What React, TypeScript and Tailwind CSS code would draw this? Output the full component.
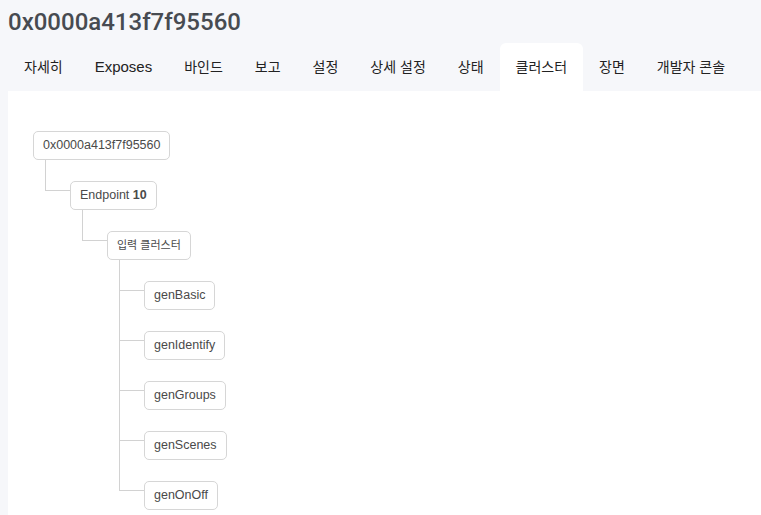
import React from "react";

type TNode = { label: React.ReactNode; korean?: boolean; children?: TNode[] };

const tree: TNode = {
  label: "0x0000a413f7f95560",
  children: [
    {
      label: (
        <>
          Endpoint <span className="font-bold">10</span>
        </>
      ),
      children: [
        {
          label: "입력 클러스터",
          korean: true,
          children: [
            { label: "genBasic" },
            { label: "genIdentify" },
            { label: "genGroups" },
            { label: "genScenes" },
            { label: "genOnOff" },
          ],
        },
      ],
    },
  ],
};

function Box({ node }: { node: TNode }) {
  return (
    <div
      className={
        "flex h-[29px] items-center rounded-[5px] border border-[#d6d6d6] bg-white px-[9px] text-[#4a4a4a] " +
        (node.korean ? "text-[11px]" : "text-[12.5px]")
      }
    >
      <span className="whitespace-pre">{node.label}</span>
    </div>
  );
}

function Tree({ node }: { node: TNode }) {
  const kids = node.children ?? [];
  return (
    <div className="flex flex-col items-start">
      <Box node={node} />
      {kids.length > 0 && (
        <div className="ml-[12px] flex flex-col">
          {kids.map((c, i) => (
            <div key={i} className="relative pl-[25px] pt-[21px]">
              <div
                className={
                  "absolute left-0 top-0 w-px bg-[#d2d2d2] " +
                  (i === kids.length - 1 ? "h-[30px]" : "h-full")
                }
              />
              <div className="absolute left-0 top-[30px] h-px w-[25px] bg-[#d2d2d2]" />
              <Tree node={c} />
            </div>
          ))}
        </div>
      )}
    </div>
  );
}

const tabs: { label: string; latin?: boolean; active?: boolean }[] = [
  { label: "자세히" },
  { label: "Exposes", latin: true },
  { label: "바인드" },
  { label: "보고" },
  { label: "설정" },
  { label: "상세 설정" },
  { label: "상태" },
  { label: "클러스터", active: true },
  { label: "장면" },
  { label: "개발자 콘솔" },
];

export default function App() {
  return (
    <div
      className="min-h-screen overflow-hidden bg-[#f6f7fa]"
      style={{ fontFamily: '"Liberation Sans", "Noto Sans CJK KR", sans-serif' }}
    >
      <div
        className="px-2 pt-[6px] text-[24px] font-medium leading-[32px] text-[#474b51]"
        style={{ fontFamily: 'Roboto, "Liberation Sans", sans-serif' }}
      >
        0x0000a413f7f95560
      </div>
      <div className="mt-[5px] flex h-[48px] px-2">
        {tabs.map((t) => (
          <div
            key={t.label}
            className={
              "flex h-full items-center whitespace-pre px-4 text-[#222222] " +
              (t.latin ? "text-[15px] " : "text-[14px] ") +
              (t.active ? "rounded-t-[6px] bg-white" : "")
            }
          >
            {t.label}
          </div>
        ))}
      </div>
      <div className="ml-2 min-h-[424px] bg-white pb-6 pl-[25px] pt-[40px]">
        <Tree node={tree} />
      </div>
    </div>
  );
}
